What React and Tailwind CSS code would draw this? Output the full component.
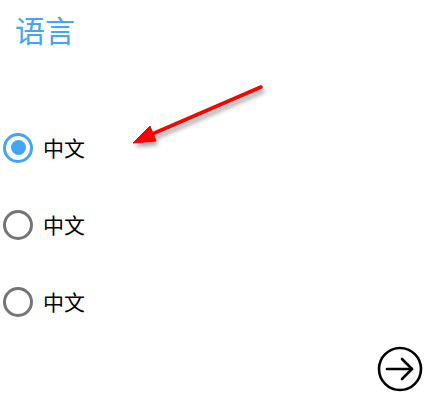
import React from 'react';

const options = [
  { id: 'zh1', label: '中文', checked: true },
  { id: 'zh2', label: '中文', checked: false },
  { id: 'zh3', label: '中文', checked: false },
];

// Material 风格的单选按钮
const Radio = ({ checked }) => (
  <span
    className={`w-[30px] h-[30px] rounded-full border-[3px] flex items-center justify-center ${
      checked ? 'border-[#42a5f5]' : 'border-[#757575]'
    }`}
  >
    {checked && <span className="w-[15px] h-[15px] rounded-full bg-[#42a5f5]" />}
  </span>
);

const NextButton = () => (
  <svg width="46" height="46" viewBox="0 0 46 46" fill="none" stroke="#000" strokeLinecap="round" strokeLinejoin="round">
    <circle cx="23" cy="23" r="21" strokeWidth="2.6" />
    <path d="M10 23h25" strokeWidth="2.6" />
    <path d="M25 13l10 10-10 10" strokeWidth="2.6" />
  </svg>
);

// 指向第一项的红色箭头标注
const Annotation = () => (
  <svg className="absolute left-0 top-0 pointer-events-none" width="436" height="394">
    <defs>
      <filter id="sh" x="-20%" y="-50%" width="140%" height="200%">
        <feGaussianBlur stdDeviation="2" />
      </filter>
    </defs>
    <g transform="translate(2 4)" opacity="0.45" filter="url(#sh)">
      <path d="M261 87 L143 138" stroke="#333" strokeWidth="4" strokeLinecap="round" />
      <path d="M133 143 L150 126 L156 141 Z" fill="#333" />
    </g>
    <path d="M261 87 L143 138" stroke="#ff0000" strokeWidth="3.6" strokeLinecap="round" />
    <path d="M133 143 L150 126 L156 141 Z" fill="#ff0000" stroke="#ff0000" strokeWidth="1" strokeLinejoin="round" />
  </svg>
);

export default function App() {
  return (
    <div
      className="relative w-[436px] h-[394px] bg-white overflow-hidden"
      style={{ fontFamily: '"Noto Sans CJK SC", "Noto Sans", sans-serif' }}
    >
      <div className="pt-[12px] pl-[15px]">
        <h1 className="text-[30px] leading-[34px] text-[#42a5f5] font-normal">语言</h1>
      </div>

      <div className="mt-[63px] flex flex-col">
        {options.map((o) => (
          <div key={o.id} className="h-[77px] flex items-center pl-[3px]">
            <Radio checked={o.checked} />
            <span className="ml-[10px] text-[21px] leading-none text-black">{o.label}</span>
          </div>
        ))}
      </div>

      <div className="flex justify-end pr-[13px] mt-[6px]">
        <NextButton />
      </div>

      <Annotation />
    </div>
  );
}
